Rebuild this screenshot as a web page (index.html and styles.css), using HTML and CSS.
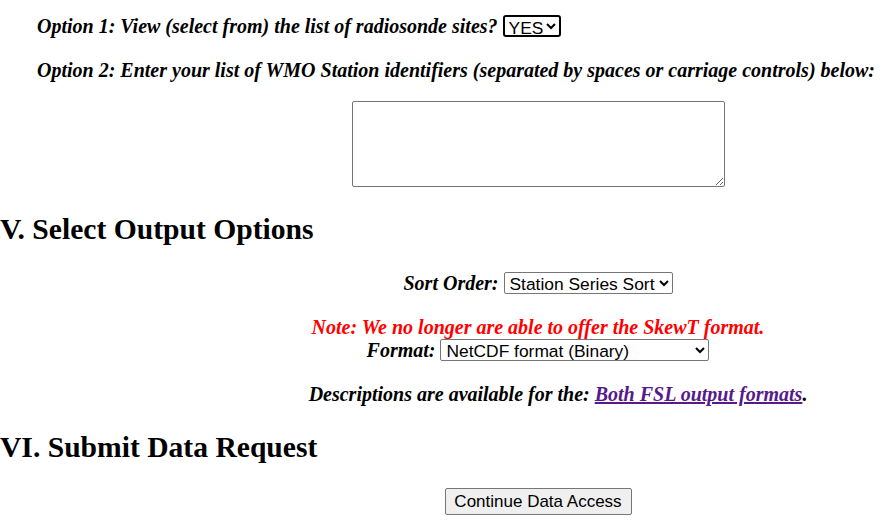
FILE: index.html
```html
<!DOCTYPE html>
<html>
<head>
<meta charset="utf-8">
<link rel="stylesheet" href="styles.css">
</head>
<body>
<div class="options">
  <p class="opt opt1"><span>Option 1: View (select from) the list of radiosonde sites?</span><select class="sel sel-yes"><option>YES</option><option>NO</option></select></p>
  <p class="opt opt2">Option 2: Enter your list of WMO Station identifiers (separated by spaces or carriage controls) below:</p>
  <div class="ta-wrap"><textarea class="ta"></textarea></div>
</div>
<h2 class="sec sec5">V. Select Output Options</h2>
<div class="center">
  <p class="line row sort"><span>Sort Order:</span><select class="sel sel-sort"><option>Station Series Sort</option></select></p>
  <p class="note">Note: We no longer are able to offer the SkewT format.</p>
  <p class="line row fmt"><span>Format:</span><select class="sel sel-fmt"><option>NetCDF format (Binary)</option></select></p>
  <p class="line desc">Descriptions are available for the: <a href="#" class="lnk">Both FSL output formats</a>.</p>
</div>
<h2 class="sec sec6">VI. Submit Data Request</h2>
<div class="center">
  <button class="btn">Continue Data Access</button>
</div>
</body>
</html>
```
FILE: styles.css
```css
html, body { margin: 0; padding: 0; background: #fff; }
body { font-family: "Liberation Serif", "Times New Roman", serif; color: #000; }
.options { padding-left: 37px; }
.opt { margin: 0; font-size: 20px; font-weight: bold; font-style: italic; }
.opt1 { padding-top: 14px; height: 24px; line-height: 24px; display: flex; align-items: center; gap: 5px; }
.opt2 { margin-top: 20px; line-height: 24px; }
.ta-wrap { padding-left: 315px; padding-top: 19px; }
.ta { width: 373px; height: 86px; box-sizing: border-box; border: 1px solid #767676; border-radius: 2px; display: block; margin: 0; }
.sec { margin: 0; font-size: 29.6px; font-weight: bold; line-height: 36px; }
.sec5 { margin-top: 24px; }
.center { margin-left: 193px; width: 690px; text-align: center; }
.line, .note { margin: 0; font-size: 20px; font-weight: bold; font-style: italic; line-height: 22px; }
.row { display: flex; justify-content: center; align-items: center; gap: 5px; }
.sort { margin-top: 25px; }
.note { color: #ff0000; margin-top: 22px; }
.fmt { line-height: 22px; margin-top: 1px; }
.desc { margin-top: 22px; padding-left: 40px; }
.lnk { color: #551a8b; }
.sel { font-family: "Liberation Sans", Arial, sans-serif; font-size: 17.4px; height: 22px; box-sizing: border-box; border: 1px solid #767676; border-radius: 2px; background: #fff; color: #000; padding: 0 0 0 1px; margin: 0; }
.sel-yes { border: 2px solid #000; border-radius: 3px; width: 58px; padding: 0; }
.sel-sort { width: 169px; }
.sel-fmt { width: 269px; }
.sec6 { margin-top: 24px; }
.btn { display: block; margin: 23px auto 0; font-family: "Liberation Sans", Arial, sans-serif; font-size: 17px; width: 187px; height: 27px; background: #efefef; border: 1px solid #767676; border-radius: 2px; color: #000; padding: 0; }
```
